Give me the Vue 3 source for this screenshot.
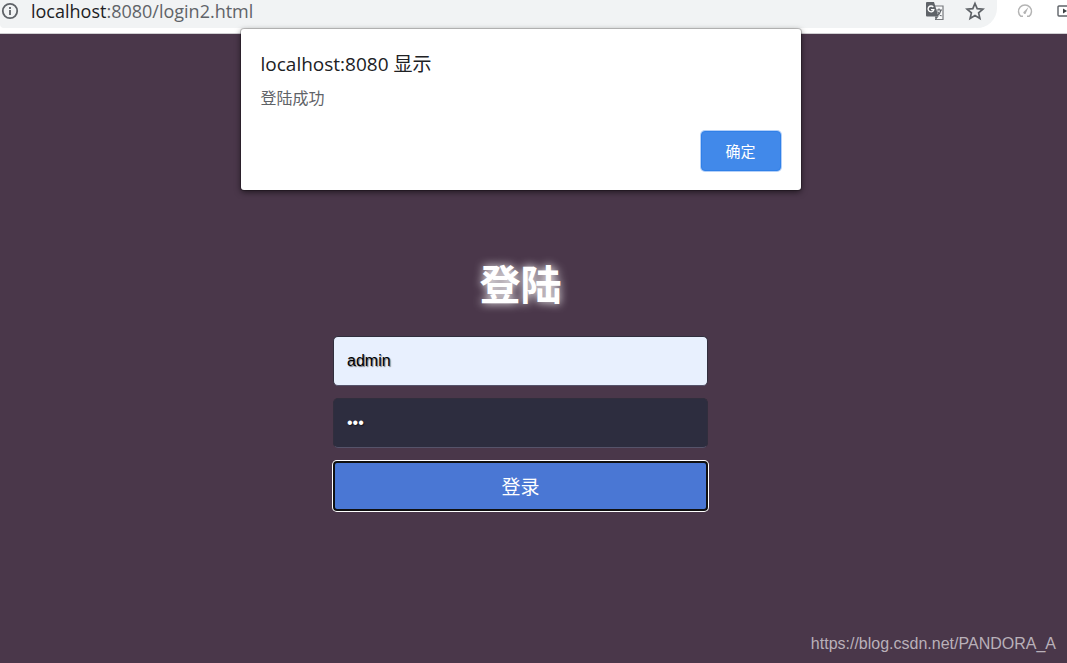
<script setup>
import { ref } from 'vue'

const username = ref('admin')
const password = ref('123')
const dialogOpen = ref(true)
</script>

<template>
  <div class="window">
    <header class="toolbar">
      <div class="omnibox">
        <svg class="info" viewBox="0 0 18 18" aria-hidden="true">
          <circle cx="9" cy="9" r="7.2" fill="none" stroke="#5f6368" stroke-width="1.8" />
          <path d="M9 8v5M9 5v2" stroke="#5f6368" stroke-width="1.8" />
        </svg>
        <span class="url"><b>localhost</b>:8080/login2.html</span>
        <svg class="translate" viewBox="0 0 20 20" aria-hidden="true">
          <path d="M9 5h9v13.500h-8" fill="#f8f9fa" stroke="#77797d" stroke-width="1.200" />
          <path d="M2 1h7l4.500 14.500H2a1 1 0 0 1-1-1V2a1 1 0 0 1 1-1z" fill="#5f6368" />
          <path d="M10 15.500h3.500L10.500 19z" fill="#5f6368" />
          <path d="M8.300 6.100A2.900 2.900 0 1 0 8.800 8.700H6" fill="none" stroke="#fff" stroke-width="1.300" />
          <path d="M11.500 9h5.500M14 7.500V9M16 9c-.5 2-2 4.500-3.500 5.500M12.500 10.500c.8 1.500 2 3.500 4 4.500" fill="none" stroke="#5f6368" stroke-width="1.200" />
        </svg>
        <svg class="star" viewBox="0 0 20 20" aria-hidden="true">
          <path d="M10 2.500l2.200 5.200 5.700.5-4.300 3.700 1.300 5.500-4.900-2.900-4.900 2.900 1.300-5.500-4.300-3.700 5.700-.5z" fill="none" stroke="#5f6368" stroke-width="1.700" />
        </svg>
      </div>
      <svg class="gauge" viewBox="0 0 16 16" aria-hidden="true">
        <path d="M4 13.500A6.500 6.500 0 1 1 12 13.500M3.500 13.300h2.500M10 13.300h2.500" fill="none" stroke="#b4b4b4" stroke-width="1.500" />
        <path d="M11.500 4L9 9.800a1.300 1.300 0 1 1-2-1.300z" fill="#b4b4b4" />
      </svg>
      <svg class="player" viewBox="0 0 16 14" aria-hidden="true">
        <rect x="1" y="2" width="14" height="10" rx="1" fill="none" stroke="#5f6368" stroke-width="1.400" />
        <path d="M6 4.500v5l4-2.500z" fill="#3c4043" />
      </svg>
    </header>

    <main class="page">
      <form class="login" @submit.prevent="dialogOpen = true">
        <h1>登陆</h1>
        <input v-model="username" class="filled" type="text" aria-label="用户名" />
        <input v-model="password" type="password" aria-label="密码" />
        <button type="submit">登录</button>
      </form>
      <a class="watermark" href="https://blog.csdn.net/PANDORA_A">https://blog.csdn.net/PANDORA_A</a>
    </main>

    <div v-if="dialogOpen" class="dialog" role="alertdialog" aria-labelledby="origin" aria-describedby="message">
      <h2 id="origin">localhost:8080 显示</h2>
      <p id="message">登陆成功</p>
      <button type="button" @click="dialogOpen = false">确定</button>
    </div>
  </div>
</template>

<style>
body {
  margin: 0;
}
</style>

<style scoped>
.window {
  --offset: 26px;
  position: relative;
  display: flex;
  flex-direction: column;
  min-height: 100vh;
  overflow: hidden;
  background: #4a374a;
  font-family: "Open Sans", "Noto Sans CJK SC", sans-serif;
}

.toolbar {
  display: flex;
  height: 33px;
  background: #fff;
  border-bottom: 1px solid #d0cfd2;
}

.omnibox {
  display: flex;
  flex: 1;
  align-items: center;
  box-sizing: border-box;
  height: 28px;
  padding: 0 12px 7px 1px;
  background: #f1f3f4;
  border-radius: 0 0 20px 4px;
}

.toolbar svg {
  flex: none;
}

.info {
  width: 18px;
  height: 18px;
}

.url {
  flex: 1;
  margin-left: 12px;
  color: #5f6368;
  font-size: 18px;
  line-height: 20px;
}

.url b {
  color: #202124;
  font-weight: 400;
}

.translate {
  width: 20px;
  height: 20px;
}

.star {
  width: 20px;
  height: 20px;
  margin-left: 20px;
}

.gauge {
  width: 16px;
  height: 16px;
  margin: 3px 0 0 20px;
}

.player {
  width: 16px;
  height: 14px;
  margin: 4px -6px 0 24px;
}

.page {
  display: flex;
  flex: 1;
  flex-direction: column;
  align-items: center;
}

.login {
  display: flex;
  flex-direction: column;
  width: 375px;
  max-width: 90%;
  margin: 220px var(--offset) 0 0;
}

.login h1 {
  margin: 0 0 22px;
  color: #fff;
  font-size: 41px;
  font-weight: 700;
  line-height: 60px;
  text-align: center;
  text-shadow: 0 0 10px #fff;
}

.login input {
  box-sizing: border-box;
  height: 50px;
  margin: 0 0 12px;
  padding: 0 13px;
  color: #fff;
  background: #2d2d3f;
  border: 1px solid #312e3d;
  border-bottom-color: #56536a;
  border-radius: 5px;
  outline: none;
  font-family: "Liberation Sans", sans-serif;
  font-size: 16px;
  text-shadow: 1px 1px 1px rgba(0, 0, 0, 0.5);
}

.login input.filled {
  color: #000;
  background: #e8f0fe;
}

.login button {
  height: 46px;
  margin: 3px 2px 0;
  padding: 0 0 2px;
  color: #fff;
  background: #4a77d4;
  border: 0;
  border-radius: 2px;
  box-shadow: 0 0 0 2px #101010, 0 0 0 3px #fff;
  font-family: "Noto Sans CJK SC", sans-serif;
  font-size: 19px;
  font-weight: 400;
}

.watermark {
  align-self: flex-end;
  margin: auto 11px 8px 0;
  color: #b9b0b9;
  font-family: "Liberation Sans", sans-serif;
  font-size: 16px;
  line-height: 22px;
  text-decoration: none;
}

.dialog {
  position: absolute;
  top: 29px;
  left: calc(50% - var(--offset) / 2);
  display: flex;
  flex-direction: column;
  box-sizing: border-box;
  width: 560px;
  max-width: 100%;
  padding: 20px 20px 19px;
  background: #fff;
  border-radius: 3px;
  box-shadow: 0 0 0 1px rgba(0, 0, 0, 0.2), 0 2px 6px rgba(0, 0, 0, 0.6);
  transform: translateX(-50%);
}

.dialog h2 {
  margin: 0;
  color: #202124;
  font-size: 19px;
  font-weight: 400;
  line-height: 30px;
}

.dialog p {
  margin: 7px 0 21px;
  color: #5f6368;
  font-size: 16px;
  line-height: 24px;
}

.dialog button {
  align-self: flex-end;
  width: 80px;
  height: 40px;
  padding: 0 0 2px;
  color: #fff;
  background: #4189ea;
  border: 1px solid #3080e8;
  border-radius: 4px;
  box-shadow: 0 0 0 1px #b4d0f8;
  font-family: "Noto Sans CJK SC", sans-serif;
  font-size: 15px;
}
</style>
